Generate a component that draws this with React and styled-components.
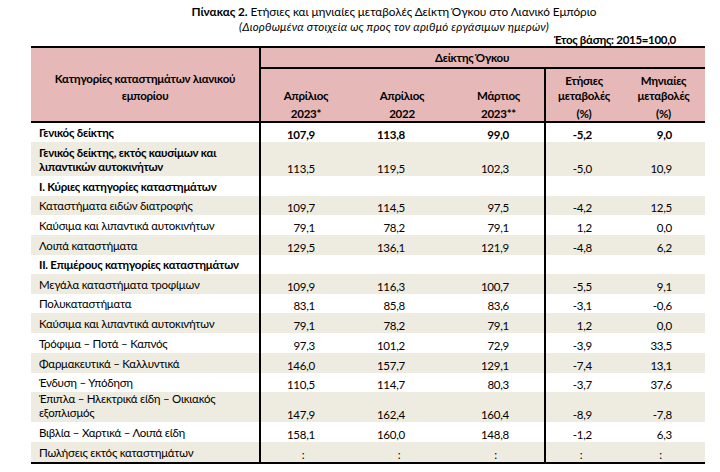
import React from 'react';
import styled, { createGlobalStyle } from 'styled-components';

const GlobalStyle = createGlobalStyle`
  html, body { margin: 0; padding: 0; background: #fff; }
  body { font-family: Lato, "Noto Sans", sans-serif; color: #000; }
`;

const COLS = '228px 92px 102px 91px 78px 83px';
const PINK = '#e6b8b7';
const BEIGE = '#eeece1';

const Page = styled.div`
  width: 720px;
  height: 472px;
  box-sizing: border-box;
  padding-top: 4px;
  overflow: hidden;
`;

const Title = styled.div`
  padding-left: 68px;
  text-align: center;
  font-size: 11.8px;
  letter-spacing: -0.05px;
  line-height: 16px;
  b { font-weight: 700; }
`;

const Subtitle = styled.div`
  padding-left: 68px;
  text-align: center;
  font-style: italic;
  font-size: 11.5px;
  letter-spacing: 0.2px;
  line-height: 14px;
`;

const BaseYear = styled.div`
  text-align: right;
  padding-right: 44px;
  font-weight: 700;
  font-size: 11.5px;
  letter-spacing: -0.3px;
  line-height: 12px;
`;

const Table = styled.div`
  margin-left: 31px;
  width: 674px;
  font-size: 11.5px;
  letter-spacing: -0.25px;
`;

const Head = styled.div`
  display: grid;
  grid-template-columns: ${COLS};
  grid-template-rows: 21px 52px;
  background: ${PINK};
  border-top: 2px solid #000;
  border-bottom: 2px solid #000;
  font-weight: 700;
`;

const HeadLabel = styled.div`
  grid-row: 1 / span 2;
  display: flex;
  align-items: center;
  justify-content: center;
  text-align: center;
  line-height: 17px;
  padding-top: 4px;
`;

const HeadGroup = styled.div`
  grid-column: 2 / span 5;
  display: flex;
  align-items: center;
  justify-content: center;
  padding-right: 22px;
  border-left: 2px solid #000;
  border-bottom: 2px solid #000;
`;

const HeadCol = styled.div`
  display: flex;
  flex-direction: column;
  justify-content: flex-end;
  align-items: center;
  line-height: 15px;
  border-left: ${p => (p.$divider ? '2px solid #000' : 'none')};
`;

const HeadLast = styled.span`
  margin-top: 4px;
  line-height: 14px;
`;

const Body = styled.div`
  border-bottom: 2px solid #000;
`;

const Row = styled.div`
  display: grid;
  grid-template-columns: ${COLS};
  height: ${p => p.$h}px;
  background: ${p => (p.$shade ? BEIGE : '#fff')};
`;

const Label = styled.div`
  display: flex;
  align-items: flex-end;
  padding: 0 0 2px 8px;
  line-height: 14px;
  font-weight: ${p => (p.$bold ? 700 : 400)};
`;

const Num = styled.div`
  display: flex;
  align-items: flex-end;
  justify-content: ${p => (p.$na ? 'center' : 'flex-end')};
  padding-right: ${p => (p.$na ? 6 : p.$pr)}px;
  line-height: 14px;
  font-weight: ${p => (p.$bold ? 700 : 400)};
  border-left: ${p => (p.$divider ? '2px solid #000' : 'none')};
`;

const PAD = [36, 48, 35, 30, 33];
const DIV = [true, false, false, true, false];

const rows = [
  { l: 'Γενικός δείκτης', v: ['107,9', '113,8', '99,0', '-5,2', '9,0'], bold: true, nb: true, h: 19 },
  { l: ['Γενικός δείκτης, εκτός καυσίμων και', 'λιπαντικών αυτοκινήτων'], v: ['113,5', '119,5', '102,3', '-5,0', '10,9'], bold: true, h: 34 },
  { l: 'I. Κύριες κατηγορίες καταστημάτων', v: ['', '', '', '', ''], bold: true, h: 20 },
  { l: 'Καταστήματα ειδών διατροφής', v: ['109,7', '114,5', '97,5', '-4,2', '12,5'], h: 19 },
  { l: 'Καύσιμα και λιπαντικά αυτοκινήτων', v: ['79,1', '78,2', '79,1', '1,2', '0,0'], h: 20 },
  { l: 'Λοιπά καταστήματα', v: ['129,5', '136,1', '121,9', '-4,8', '6,2'], h: 20 },
  { l: 'II. Επιμέρους κατηγορίες καταστημάτων', v: ['', '', '', '', ''], bold: true, h: 19 },
  { l: 'Μεγάλα καταστήματα τροφίμων', v: ['109,9', '116,3', '100,7', '-5,5', '9,1'], h: 20 },
  { l: 'Πολυκαταστήματα', v: ['83,1', '85,8', '83,6', '-3,1', '-0,6'], h: 19 },
  { l: 'Καύσιμα και λιπαντικά αυτοκινήτων', v: ['79,1', '78,2', '79,1', '1,2', '0,0'], h: 20 },
  { l: 'Τρόφιμα – Ποτά – Καπνός', v: ['97,3', '101,2', '72,9', '-3,9', '33,5'], h: 20 },
  { l: 'Φαρμακευτικά – Καλλυντικά', v: ['146,0', '157,7', '129,1', '-7,4', '13,1'], h: 20 },
  { l: 'Ένδυση – Υπόδηση', v: ['110,5', '114,7', '80,3', '-3,7', '37,6'], h: 19 },
  { l: ['Έπιπλα – Ηλεκτρικά είδη – Οικιακός', 'εξοπλισμός'], v: ['147,9', '162,4', '160,4', '-8,9', '-7,8'], h: 30 },
  { l: 'Βιβλία – Χαρτικά – Λοιπά είδη', v: ['158,1', '160,0', '148,8', '-1,2', '6,3'], h: 20 },
  { l: 'Πωλήσεις εκτός καταστημάτων', v: [':', ':', ':', ':', ':'], h: 20 },
];

const heads = [
  { top: ['Απρίλιος'], last: '2023*' },
  { top: ['Απρίλιος'], last: '2022' },
  { top: ['Μάρτιος'], last: '2023**' },
  { top: ['Ετήσιες', 'μεταβολές'], last: '(%)' },
  { top: ['Μηνιαίες', 'μεταβολές'], last: '(%)' },
];

export default function App() {
  return (
    <Page>
      <GlobalStyle />
      <Title>
        <b>Πίνακας 2.</b> Ετήσιες και μηνιαίες μεταβολές Δείκτη Όγκου στο Λιανικό Εμπόριο
      </Title>
      <Subtitle>(Διορθωμένα στοιχεία ως προς τον αριθμό εργάσιμων ημερών)</Subtitle>
      <BaseYear>Έτος βάσης: 2015=100,0</BaseYear>
      <Table>
        <Head>
          <HeadLabel>
            Κατηγορίες καταστημάτων λιανικού
            <br />
            εμπορίου
          </HeadLabel>
          <HeadGroup>Δείκτης Όγκου</HeadGroup>
          {heads.map((h, i) => (
            <HeadCol key={i} $divider={DIV[i]}>
              {h.top.map(t => (
                <span key={t}>{t}</span>
              ))}
              <HeadLast>{h.last}</HeadLast>
            </HeadCol>
          ))}
        </Head>
        <Body>
          {rows.map((r, i) => (
            <Row key={i} $h={r.h} $shade={i % 2 === 1}>
              <Label $bold={r.bold}>
                {Array.isArray(r.l) ? (
                  <span>
                    {r.l[0]}
                    <br />
                    {r.l[1]}
                  </span>
                ) : (
                  r.l
                )}
              </Label>
              {r.v.map((v, j) => (
                <Num key={j} $pr={PAD[j]} $divider={DIV[j]} $bold={r.nb} $na={v === ':'}>
                  {v}
                </Num>
              ))}
            </Row>
          ))}
        </Body>
      </Table>
    </Page>
  );
}
